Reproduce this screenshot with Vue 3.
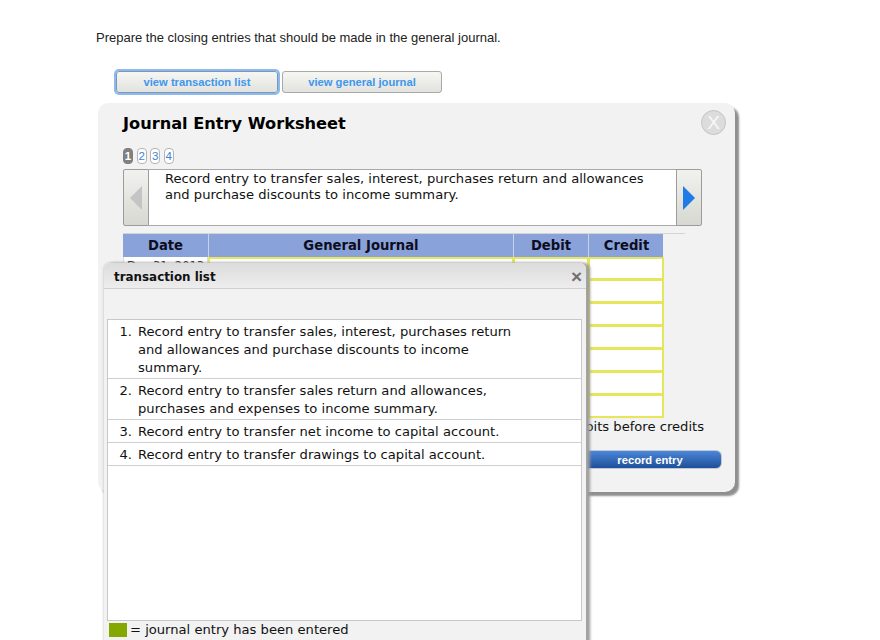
<script setup>
const steps = [1, 2, 3, 4]
const rows = [0, 1, 2, 3, 4, 5, 6]
const entries = [
  'Record entry to transfer sales, interest, purchases return and allowances and purchase discounts to income summary.',
  'Record entry to transfer sales return and allowances, purchases and expenses to income summary.',
  'Record entry to transfer net income to capital account.',
  'Record entry to transfer drawings to capital account.'
]
</script>

<template>
  <div class="page">
    <p class="prompt">Prepare the closing entries that should be made in the general journal.</p>
    <div class="tabs">
      <button class="tab focus">view transaction list</button>
      <button class="tab">view general journal</button>
    </div>

    <section class="sheet">
      <div class="sheet-head">
        <h1>Journal Entry Worksheet</h1>
        <span class="close">X</span>
      </div>
      <div class="steps">
        <span v-for="s in steps" :key="s" class="step" :class="{ on: s === 1 }">{{ s }}</span>
      </div>
      <div class="pager">
        <div class="arrow"><i class="tri left"></i></div>
        <div class="desc">Record entry to transfer sales, interest, purchases return and allowances and purchase discounts to income summary.</div>
        <div class="arrow next"><i class="tri right"></i></div>
      </div>
      <div class="rule"></div>
      <div class="grid head">
        <div>Date</div>
        <div>General Journal</div>
        <div>Debit</div>
        <div>Credit</div>
      </div>
      <div v-for="r in rows" :key="r" class="grid row">
        <div class="date">{{ r === 0 ? 'Dec 31, 2013' : '' }}</div>
        <div class="cell"></div>
        <div class="cell"></div>
        <div class="cell"></div>
      </div>
      <div class="note">enter debits before credits</div>
      <div class="actions"><button class="record">record entry</button></div>
    </section>

    <aside class="popup">
      <header class="popup-head">
        <strong>transaction list</strong>
        <span class="x">×</span>
      </header>
      <div class="popup-gap"></div>
      <ol class="list">
        <li v-for="(e, i) in entries" :key="i">
          <span class="num">{{ i + 1 }}.</span>
          <span class="txt">{{ e }}</span>
        </li>
      </ol>
      <div class="legend"><i class="swatch"></i>= journal entry has been entered</div>
    </aside>
  </div>
</template>

<style scoped>
.page {
  position: relative;
  height: 640px;
  overflow: hidden;
  background: #fff;
  font-family: "DejaVu Sans", Verdana, sans-serif;
  color: #111;
  box-sizing: border-box;
  padding-top: 30px;
}
.prompt {
  margin: 0 0 0 96px;
  font: 13px/15px "Liberation Sans", Arial, sans-serif;
  color: #222;
}
.tabs {
  display: flex;
  gap: 4px;
  margin: 26px 0 0 116px;
  height: 22px;
}
.tab {
  width: 160px;
  height: 22px;
  padding: 0;
  border: 1px solid #a9a9a9;
  border-radius: 3px;
  background: linear-gradient(#f6f6f3, #e2e2de);
  color: #3c97ee;
  font: bold 11.2px "Liberation Sans", Arial, sans-serif;
}
.tab.focus {
  width: 162px;
  box-shadow: 0 0 0 2px #8db9ef;
  border-color: #7a97b8;
}
.sheet {
  box-sizing: border-box;
  width: 637px;
  height: 389px;
  margin: 10px 0 0 98px;
  padding: 10px 25px 0 25px;
  background: #f2f2f2;
  border-radius: 10px;
  box-shadow: 4px 4px 2px #8f8f8f;
}
.sheet-head {
  display: flex;
  justify-content: space-between;
  align-items: flex-start;
  height: 21px;
}
h1 {
  margin: 0;
  font-size: 16.2px;
  line-height: 21px;
  font-weight: bold;
  color: #000;
}
.close {
  width: 25px;
  height: 25px;
  margin: -3px -16px 0 0;
  box-sizing: border-box;
  border: 1px solid #c4c4c4;
  border-radius: 50%;
  background: #dcdcdc;
  color: #f8f8f8;
  font: 19px/23px "Liberation Sans", Arial, sans-serif;
  text-align: center;
}
.steps {
  display: flex;
  gap: 3.6px;
  margin-top: 14px;
  height: 16px;
}
.step {
  width: 8px;
  height: 14px;
  border: 1px solid #b5b5b5;
  border-radius: 4px;
  background: #fff;
  color: #3b82d8;
  font: 11.5px/14px "Liberation Sans", Arial, sans-serif;
  text-align: center;
}
.step.on {
  background: #808080;
  border-color: #808080;
  color: #fff;
  font-weight: bold;
}
.pager {
  display: flex;
  width: 579px;
  height: 57px;
  margin-top: 5px;
}
.arrow {
  box-sizing: border-box;
  flex: none;
  width: 26px;
  display: flex;
  align-items: center;
  justify-content: center;
  border: 1px solid #9c9c9c;
  border-radius: 2px 0 0 2px;
  background: linear-gradient(#f1f1ee, #d8d8d2);
}
.arrow.next {
  border-radius: 0 2px 2px 0;
  margin-left: -1px;
}
.tri {
  width: 0;
  height: 0;
  border-style: solid;
  border-color: transparent;
  border-width: 12px 0 12px 12px;
}
.tri.left {
  border-width: 12px 12px 12px 0;
  border-right-color: #c4c4c4;
}
.tri.right {
  border-left-color: #1f7be6;
}
.desc {
  flex: 1;
  box-sizing: border-box;
  padding: 1px 30px 0 16px;
  background: #fff;
  border: 1px solid #a9a9a9;
  border-left: 0;
  font-size: 13.12px;
  line-height: 16px;
}
.rule {
  width: 562px;
  height: 1px;
  margin-top: 7px;
  background: #d4d4d4;
}
.grid {
  display: grid;
  grid-template-columns: 85px 305px 75px 76px;
  width: 541px;
}
.head {
  width: 540px;
  height: 23px;
  background: #8aa2da;
  font-size: 13.2px;
  font-weight: bold;
  line-height: 23px;
  text-align: center;
  color: #0d0d20;
}
.head > div + div {
  border-left: 1px solid #c8d2ea;
}
.row {
  height: 23px;
}
.date {
  box-sizing: border-box;
  background: #fff;
  border: 1px solid #ddd;
  border-top: 0;
  font-size: 11.5px;
  line-height: 16px;
  padding: 1px 0 0 3px;
  white-space: nowrap;
  overflow: hidden;
}
.cell {
  box-sizing: border-box;
  background: #fff;
  border: 2px solid #e6e65a;
  border-top-width: 1px;
  border-right-width: 1px;
}
.head + .row .cell {
  border-top-width: 2px;
}
.cell:last-child {
  border-right-width: 2px;
}
.note {
  margin-top: 1px;
  width: 581px;
  text-align: right;
  font-size: 13.12px;
  line-height: 16px;
}
.actions {
  display: flex;
  justify-content: flex-end;
  margin-top: 15px;
  width: 599px;
}
.record {
  width: 240px;
  height: 19px;
  padding: 0 0 0 96px;
  border: 1px solid #c4c8d0;
  border-radius: 6px;
  background: linear-gradient(#4a86d8, #1f4f99);
  color: #fff;
  font: bold 11.2px "Liberation Sans", Arial, sans-serif;
}
.popup {
  position: absolute;
  left: 104px;
  top: 263px;
  width: 482px;
  height: 400px;
  background: #f2f2f2;
  border-radius: 6px 6px 0 0;
  box-shadow: 0 0 3px #bbb, 4px 0 3px #999;
}
.popup-head {
  box-sizing: border-box;
  height: 26px;
  padding: 2px 4px 0 10px;
  display: flex;
  justify-content: space-between;
  align-items: center;
  background: linear-gradient(#dcdcdc, #ededed);
  border-bottom: 1px solid #d0d0d0;
  border-radius: 6px 6px 0 0;
  font-size: 11.9px;
  color: #111;
}
.x {
  font: bold 19px/20px "Liberation Sans", Arial, sans-serif;
  color: #707070;
}
.popup-gap {
  height: 30px;
}
.list {
  box-sizing: border-box;
  list-style: none;
  margin: 0 0 0 3px;
  padding: 0;
  width: 475px;
  height: 302px;
  background: #fff;
  border: 1px solid #c8c8c8;
  font-size: 13.12px;
  line-height: 18px;
}
.list li {
  display: flex;
  padding: 3px 0 1px 0;
  border-bottom: 1px solid #cfcfcf;
}
.num {
  flex: none;
  width: 24px;
  margin-right: 6px;
  text-align: right;
}
.txt {
  width: 386px;
}
.legend {
  display: flex;
  align-items: center;
  margin: 1px 0 0 5px;
  font-size: 13.12px;
  line-height: 16px;
}
.swatch {
  width: 18px;
  height: 14px;
  margin-right: 3px;
  background: #84a800;
}
</style>
